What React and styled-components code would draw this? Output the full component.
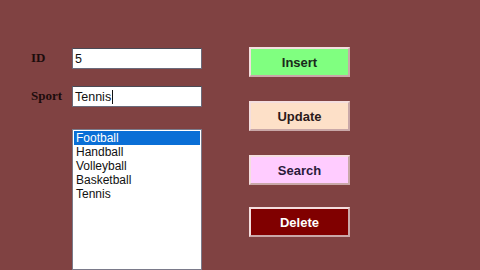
import React from 'react';
import styled, { createGlobalStyle } from 'styled-components';

const GlobalStyle = createGlobalStyle`
    html, body {
        margin:0;
        padding:0;
        background:#804242;
        overflow:hidden;
    }
`;

const sports = ['Football', 'Handball', 'Volleyball', 'Basketball', 'Tennis'];

const buttons = [
    { label: 'Insert', bg: '#80ff80', color: '#1a2a1a', mt: 0 },
    { label: 'Update', bg: '#fde0c8', color: '#2a1a1a', mt: 24 },
    { label: 'Search', bg: '#ffccff', color: '#2a1a3a', mt: 24 },
    { label: 'Delete', bg: '#800000', color: '#ffffff', mt: 22 },
];

const App = () => {
    return (
        <Page>
            <GlobalStyle />
            <FormCol>
                <Row>
                    <Label>ID</Label>
                    <TextBox>5</TextBox>
                </Row>
                <Row $mt={17}>
                    <Label>Sport</Label>
                    <TextBox>Tennis<Caret /></TextBox>
                </Row>
                <ListBox>
                    {sports.map((s, i) => (
                        <ListItem key={s} $selected={i === 0}>{s}</ListItem>
                    ))}
                </ListBox>
            </FormCol>
            <ButtonCol>
                {buttons.map((b) => (
                    <ActionBtn key={b.label} $bg={b.bg} $color={b.color} $mt={b.mt}>{b.label}</ActionBtn>
                ))}
            </ButtonCol>
        </Page>
    );
};

export default App;

const Page = styled.div`
    width:480px;
    height:270px;
    display:flex;
    background:#804242;
    overflow:hidden;
`;

const FormCol = styled.div`
    display:flex;
    flex-direction:column;
    padding:48px 0 0 31px;
    width:218px;
    box-sizing:border-box;
`;

const Row = styled.div`
    display:flex;
    align-items:center;
    height:21px;
    margin-top:${(p) => p.$mt || 0}px;
`;

const Label = styled.span`
    width:41px;
    font-family:"Liberation Serif", serif;
    font-weight:700;
    font-size:13px;
    color:#1c0c0c;
    margin-top:-2px;
`;

const TextBox = styled.div`
    width:130px;
    height:21px;
    box-sizing:border-box;
    border:1px solid #6a6a7a;
    border-top-color:#4a4a55;
    background:#fff;
    padding:0 2px;
    display:flex;
    align-items:center;
    font-family:"Liberation Sans", sans-serif;
    font-size:12.5px;
    color:#111;
`;

const Caret = styled.span`
    display:inline-block;
    width:1px;
    height:14px;
    background:#111;
    margin-left:1px;
`;

const ListBox = styled.div`
    margin:22px 0 0 41px;
    width:130px;
    height:160px;
    box-sizing:border-box;
    border:1px solid #7a7a8a;
    background:#fff;
    padding:1px;
    display:flex;
    flex-direction:column;
`;

const ListItem = styled.div`
    height:14px;
    line-height:14px;
    padding-left:2px;
    font-family:"Liberation Sans", sans-serif;
    font-size:12px;
    color:${(p) => (p.$selected ? '#fff' : '#111')};
    background:${(p) => (p.$selected ? '#0a6fd6' : 'transparent')};
`;

const ButtonCol = styled.div`
    display:flex;
    flex-direction:column;
    padding:47px 0 0 31px;
`;

const ActionBtn = styled.button`
    width:101px;
    height:30px;
    margin-top:${(p) => p.$mt}px;
    box-sizing:border-box;
    background:${(p) => p.$bg};
    color:${(p) => p.$color};
    border:2px solid #f4dede;
    border-right-color:#c9a8a8;
    border-bottom-color:#c9a8a8;
    font-family:"Liberation Sans", sans-serif;
    font-weight:700;
    font-size:13px;
    padding:0;
    cursor:pointer;
`;
